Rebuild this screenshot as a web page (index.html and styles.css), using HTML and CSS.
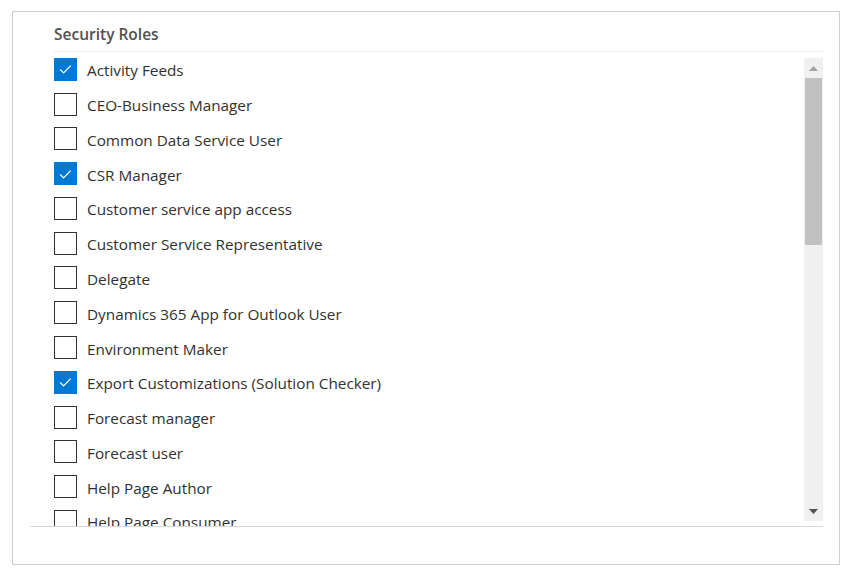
FILE: index.html
```html
<!DOCTYPE html>
<html>
<head>
<meta charset="utf-8">
<link rel="stylesheet" href="styles.css">
</head>
<body>
<div class="panel">
  <div class="header"><h2 class="title">Security Roles</h2></div>
  <div class="listwrap">
    <div class="list">
      <div class="row checked"><span class="box"><svg viewBox="0 0 22 22" width="22" height="22"><polyline points="5.5,11.5 9,15 16.5,7.5" fill="none" stroke="#fff" stroke-width="1.3"/></svg></span><span class="label">Activity Feeds</span></div>
      <div class="row"><span class="box"></span><span class="label">CEO-Business Manager</span></div>
      <div class="row"><span class="box"></span><span class="label">Common Data Service User</span></div>
      <div class="row checked"><span class="box"><svg viewBox="0 0 22 22" width="22" height="22"><polyline points="5.5,11.5 9,15 16.5,7.5" fill="none" stroke="#fff" stroke-width="1.3"/></svg></span><span class="label">CSR Manager</span></div>
      <div class="row"><span class="box"></span><span class="label">Customer service app access</span></div>
      <div class="row"><span class="box"></span><span class="label">Customer Service Representative</span></div>
      <div class="row"><span class="box"></span><span class="label">Delegate</span></div>
      <div class="row"><span class="box"></span><span class="label">Dynamics 365 App for Outlook User</span></div>
      <div class="row"><span class="box"></span><span class="label">Environment Maker</span></div>
      <div class="row checked"><span class="box"><svg viewBox="0 0 22 22" width="22" height="22"><polyline points="5.5,11.5 9,15 16.5,7.5" fill="none" stroke="#fff" stroke-width="1.3"/></svg></span><span class="label">Export Customizations (Solution Checker)</span></div>
      <div class="row"><span class="box"></span><span class="label">Forecast manager</span></div>
      <div class="row"><span class="box"></span><span class="label">Forecast user</span></div>
      <div class="row"><span class="box"></span><span class="label">Help Page Author</span></div>
      <div class="row"><span class="box"></span><span class="label">Help Page Consumer</span></div>
    </div>
    <div class="scrollbar">
      <div class="sb-btn"><svg width="9" height="5" viewBox="0 0 9 5"><polygon points="0,5 9,5 4.5,0" fill="#a3a3a3"/></svg></div>
      <div class="sb-track"><div class="sb-thumb"></div></div>
      <div class="sb-btn"><svg width="9" height="5" viewBox="0 0 9 5"><polygon points="0,0 9,0 4.5,5" fill="#505050"/></svg></div>
    </div>
  </div>
</div>
</body>
</html>
```
FILE: styles.css
```css
html, body {
  margin: 0;
  padding: 0;
  background: #fff;
}
body {
  font-family: "Open Sans", "Noto Sans", sans-serif;
  color: #323130;
}
.panel {
  box-sizing: border-box;
  margin: 11px 0 0 12px;
  width: 828px;
  height: 554px;
  border: 1px solid #cfcfcf;
  display: flex;
  flex-direction: column;
}
.header {
  margin-left: 41px;
  margin-right: 16px;
  height: 39px;
  border-bottom: 1px solid #ececec;
  display: flex;
  align-items: flex-end;
}
.title {
  margin: 0 0 6px 0;
  font-size: 15.5px;
  font-weight: 600;
  color: #505050;
  line-height: 22px;
}
.listwrap {
  margin-left: 17px;
  margin-right: 16px;
  height: 474px;
  border-bottom: 1px solid #d8d8d8;
  display: flex;
}
.list {
  flex: 1;
  overflow: hidden;
  padding-left: 24px;
}
.row {
  height: 34.77px;
  display: flex;
  align-items: center;
}
.box {
  box-sizing: border-box;
  width: 23px;
  height: 23px;
  border: 1px solid #323130;
  flex: none;
  display: flex;
  align-items: center;
  justify-content: center;
}
.row.checked .box {
  background: #0078d4;
  border-color: #0078d4;
}
.label {
  margin-left: 10px;
  margin-top: 2px;
  font-size: 15.3px;
  line-height: 20px;
}
.scrollbar {
  width: 19px;
  margin: 6px 0 5px 0;
  background: #f0f0f0;
  display: flex;
  flex-direction: column;
}
.sb-btn {
  height: 20px;
  display: flex;
  align-items: center;
  justify-content: center;
}
.sb-track {
  flex: 1;
  padding: 0 1px;
}
.sb-thumb {
  height: 167px;
  background: #c1c1c1;
}
```
